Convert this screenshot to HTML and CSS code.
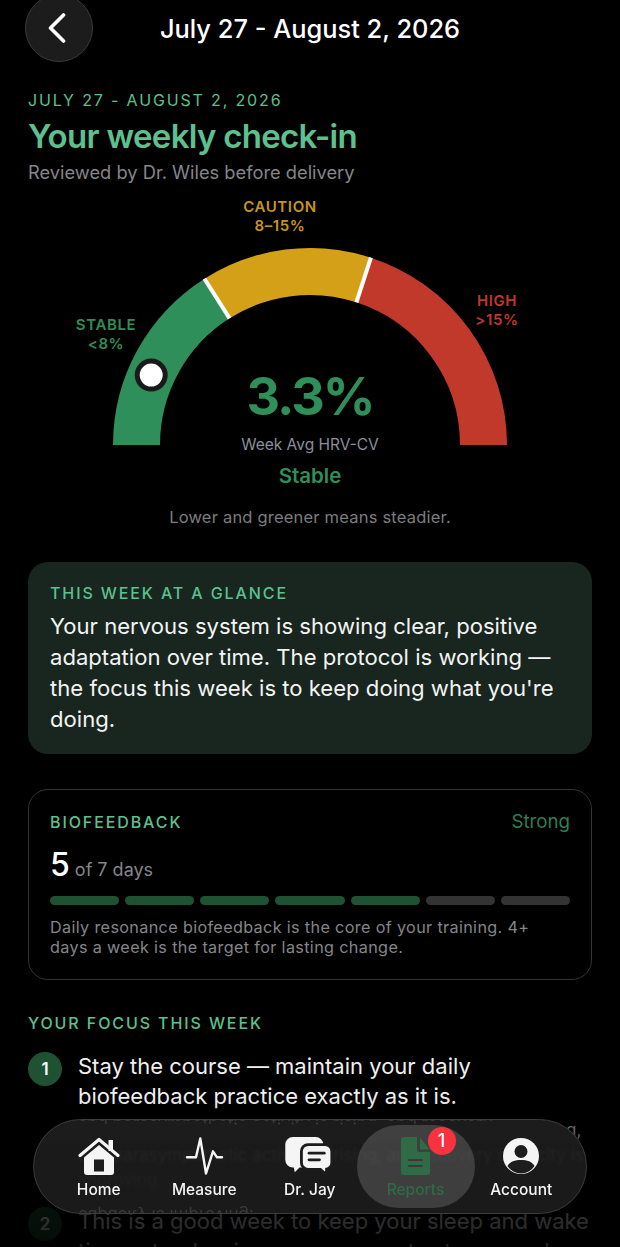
FILE: index.html
```html
<!DOCTYPE html>
<html lang="en">
<head>
    <meta charset="UTF-8">
    <meta name="viewport" content="width=device-width, initial-scale=1.0">
    <title>Weekly check-in</title>
    <link rel="stylesheet" href="styles.css">
</head>
<body>
    <div class="screen">
        <div class="topbar">
            <button class="back" aria-label="Back">
                <svg width="18" height="30" viewBox="0 0 18 30"><polyline points="15.5,2 2.5,15 15.5,28" fill="none" stroke="#fff" stroke-width="3.6" stroke-linecap="round" stroke-linejoin="round"/></svg>
            </button>
            <h1 class="topbar-title">July 27 - August 2, 2026</h1>
        </div>

        <div class="intro">
            <div class="eyebrow">JULY 27 - AUGUST 2, 2026</div>
            <h2 class="headline">Your weekly check-in</h2>
            <div class="reviewed">Reviewed by Dr. Wiles before delivery</div>
        </div>

        <div class="gauge">
            <svg class="gauge-arc" width="400" height="197" viewBox="0 0 400 197">
                <path d="M26.5 197 A173.5 173.5 0 0 1 107.04 50.51" fill="none" stroke="#2e8f5a" stroke-width="47"/>
                <path d="M107.04 50.51 A173.5 173.5 0 0 1 253.61 32" fill="none" stroke="#d4a017" stroke-width="47"/>
                <path d="M253.61 32 A173.5 173.5 0 0 1 373.5 197" fill="none" stroke="#c0392b" stroke-width="47"/>
                <line x1="119.6" y1="70.4" x2="94.4" y2="30.7" stroke="#fff" stroke-width="4"/>
                <line x1="246.4" y1="54.3" x2="260.9" y2="9.6" stroke="#fff" stroke-width="4"/>
                <circle cx="41.2" cy="127.1" r="14" fill="#fff" stroke="#1a1a1a" stroke-width="5"/>
            </svg>
            <div class="zone zone-caution">CAUTION<span>8–15%</span></div>
            <div class="zone zone-stable">STABLE<span>&lt;8%</span></div>
            <div class="zone zone-high">HIGH<span>&gt;15%</span></div>
            <div class="reading">
                <div class="reading-value">3.3%</div>
                <div class="reading-label">Week Avg HRV-CV</div>
                <div class="reading-state">Stable</div>
            </div>
        </div>
        <p class="gauge-note">Lower and greener means steadier.</p>

        <section class="glance">
            <div class="card-label">THIS WEEK AT A GLANCE</div>
            <p class="glance-text">Your nervous system is showing clear, positive adaptation over time. The protocol is working — the focus this week is to keep doing what you're doing.</p>
        </section>

        <section class="metric">
            <div class="metric-head">
                <div class="card-label">BIOFEEDBACK</div>
                <div class="metric-rating">Strong</div>
            </div>
            <div class="metric-count"><b>5</b> of 7 days</div>
            <div class="segments">
                <i class="seg on"></i><i class="seg on"></i><i class="seg on"></i><i class="seg on"></i><i class="seg on"></i><i class="seg"></i><i class="seg"></i>
            </div>
            <p class="metric-note">Daily resonance biofeedback is the core of your training. 4+ days a week is the target for lasting change.</p>
        </section>

        <section class="focus">
            <div class="card-label">YOUR FOCUS THIS WEEK</div>
            <div class="step">
                <div class="step-num">1</div>
                <div class="step-body">
                    <div class="step-text">Stay the course — maintain your daily biofeedback practice exactly as it is.</div>
                    <div class="step-why">Resting heart rate is trending downward, variability is climbing, and parasympathetic activity is rising, and recovery capacity is improving.</div>
                </div>
            </div>
            <div class="step step-two">
                <div class="step-num">2</div>
                <div class="step-body">
                    <div class="step-text">This is a good week to keep your sleep and wake times steady, since recovery gets stronger when your routine holds.</div>
                </div>
            </div>
        </section>

        <div class="fade"></div>

        <nav class="tabbar">
            <div class="mirror mirror-top">and parasympathetic activity is rising, and recovery</div>
            <div class="mirror mirror-bottom">capacity is improving.</div>
            <a class="tab">
                <svg width="42" height="38" viewBox="0 0 42 38">
                    <rect x="30.5" y="3" width="4.5" height="11" fill="#f5f5f5"/>
                    <polyline points="2,18.5 21,2.5 40,18.5" fill="none" stroke="#f5f5f5" stroke-width="3.2" stroke-linecap="round" stroke-linejoin="round"/>
                    <path d="M6 20.5 L21 8 L36 20.5 V35 a3 3 0 0 1 -3 3 H9 a3 3 0 0 1 -3 -3 Z" fill="#f5f5f5"/>
                    <rect x="16" y="22.5" width="10" height="12" fill="#1d1d1d"/>
                </svg>
                <span>Home</span>
            </a>
            <a class="tab">
                <svg width="37" height="38" viewBox="0 0 37 38">
                    <polyline points="1,20.3 10,20.3 14.3,1.5 20,36.5 27,14.3 31,20.3 36,20.3" fill="none" stroke="#f5f5f5" stroke-width="2.4" stroke-linecap="round" stroke-linejoin="round"/>
                </svg>
                <span>Measure</span>
            </a>
            <a class="tab">
                <svg width="51" height="38" viewBox="0 0 51 40">
                    <path d="M8 0 H32 a8 8 0 0 1 8 8 V24 a8 8 0 0 1 -8 8 H15 L10 37 L9 32 H8 a8 8 0 0 1 -8 -8 V8 a8 8 0 0 1 8 -8 Z" fill="#f5f5f5"/>
                    <path d="M24 8 H42 a7 7 0 0 1 7 7 V27 a7 7 0 0 1 -7 7 H44 L42.5 39 L37 34 H24 a7 7 0 0 1 -7 -7 V15 a7 7 0 0 1 7 -7 Z" fill="#f5f5f5" stroke="#1d1d1d" stroke-width="3"/>
                    <line x1="25" y1="17" x2="41" y2="17" stroke="#1d1d1d" stroke-width="3" stroke-linecap="round"/>
                    <line x1="25" y1="24" x2="36" y2="24" stroke="#1d1d1d" stroke-width="3" stroke-linecap="round"/>
                </svg>
                <span>Dr. Jay</span>
            </a>
            <a class="tab tab-active">
                <svg width="29" height="38" viewBox="0 0 29 38">
                    <path d="M3 0 H16 V12 a3 3 0 0 0 3 3 H29 V35 a3 3 0 0 1 -3 3 H3 a3 3 0 0 1 -3 -3 V3 a3 3 0 0 1 3 -3 Z" fill="#2f6b47"/>
                    <path d="M19 1 L29 12.5 H19 Z" fill="#2f6b47"/>
                    <line x1="8" y1="23" x2="21" y2="23" stroke="#3a3a3a" stroke-width="2" stroke-linecap="round"/>
                    <line x1="8" y1="29" x2="21" y2="29" stroke="#3a3a3a" stroke-width="2" stroke-linecap="round"/>
                </svg>
                <span>Reports</span>
                <b class="badge">1</b>
            </a>
            <a class="tab">
                <svg width="36" height="38" viewBox="0 0 36 38">
                    <circle cx="18" cy="19" r="18" fill="#f5f5f5"/>
                    <circle cx="18" cy="14.5" r="6.5" fill="#1d1d1d"/>
                    <path d="M4.5 29 C7 24.5 12 23 18 23 C24 23 29 24.5 31.5 29 A16 16 0 0 1 4.5 29 Z" fill="#1d1d1d"/>
                </svg>
                <span>Account</span>
            </a>
        </nav>
    </div>
</body>
</html>
```

FILE: styles.css
```css
* {
    box-sizing: border-box;
}

body {
    margin: 0;
    background: #000;
    color: #fff;
    font-family: Inter, "Noto Sans", sans-serif;
}

.screen {
    position: relative;
    width: 620px;
    height: 1247px;
    overflow: hidden;
    background: #000;
}

.topbar {
    position: relative;
    height: 58px;
    display: flex;
    align-items: center;
    justify-content: center;
}

.back {
    position: absolute;
    left: 25px;
    top: -6px;
    width: 68px;
    height: 68px;
    padding: 0 4px 0 0;
    display: flex;
    align-items: center;
    justify-content: center;
    background: #1c1c1c;
    border: 1px solid #3a3a3a;
    border-radius: 50%;
}

.topbar-title {
    margin: 0;
    font-size: 25.4px;
    font-weight: 500;
    line-height: 58px;
}

.intro {
    padding: 32px 28px 0;
}

.eyebrow {
    font-size: 16px;
    line-height: 20px;
    letter-spacing: 1.85px;
    color: #5cc08f;
}

.headline {
    margin: 6px 0 0;
    font-size: 33px;
    line-height: 40px;
    font-weight: 600;
    letter-spacing: -.7px;
    color: #5cc08f;
}

.reviewed {
    margin-top: 3px;
    font-size: 18.3px;
    line-height: 26px;
    color: #85858a;
}

.gauge {
    position: relative;
    height: 273px;
    padding-top: 63px;
}

.gauge-arc {
    display: block;
    margin: 0 auto;
    overflow: visible;
}

.zone {
    position: absolute;
    width: 120px;
    font-size: 15px;
    line-height: 19px;
    font-weight: 600;
    letter-spacing: .6px;
    text-align: center;
}

.zone span {
    display: block;
}

.zone-caution {
    left: 220px;
    top: 12px;
    color: #c8961a;
}

.zone-stable {
    left: 46px;
    top: 130px;
    color: #2e8f5a;
}

.zone-high {
    left: 437px;
    top: 106px;
    color: #c0392b;
}

.reading {
    position: absolute;
    left: 0;
    right: 0;
    top: 180px;
    text-align: center;
}

.reading-value {
    font-size: 52px;
    line-height: 64px;
    font-weight: 700;
    letter-spacing: -2px;
    color: #2e8f5a;
}

.reading-label {
    margin-top: 6px;
    font-size: 15.5px;
    line-height: 20px;
    color: #8a8f9c;
}

.reading-state {
    margin-top: 8px;
    font-size: 20.5px;
    line-height: 26px;
    font-weight: 600;
    color: #2e8f5a;
}

.gauge-note {
    margin: 48px 0 0;
    font-size: 16.5px;
    line-height: 22px;
    letter-spacing: .2px;
    text-align: center;
    color: #7c7c80;
}

.glance {
    margin: 34px 28px 0;
    height: 192px;
    padding: 21px 22px;
    background: #18261f;
    border-radius: 20px;
}

.card-label {
    font-size: 16px;
    line-height: 20px;
    font-weight: 500;
    letter-spacing: 1.9px;
    color: #5cc08f;
}

.glance-text {
    margin: 8px 0 0;
    font-size: 22.1px;
    line-height: 31px;
    color: #f4f4f4;
}

.metric {
    margin: 35px 28px 0;
    height: 191px;
    padding: 22px 21px;
    border: 1.5px solid #333;
    border-radius: 20px;
}

.metric-head {
    display: flex;
    justify-content: space-between;
    align-items: center;
}

.metric-rating {
    font-size: 18.7px;
    line-height: 20px;
    color: #2e7d55;
}

.metric-count {
    margin-top: 13px;
    font-size: 18px;
    line-height: 40px;
    color: #85858a;
}

.metric-count b {
    font-size: 32px;
    font-weight: 500;
    color: #fff;
}

.segments {
    display: flex;
    gap: 6px;
    margin-top: 6px;
}

.seg {
    flex: 1;
    height: 9px;
    border-radius: 5px;
    background: #333;
}

.seg.on {
    background: #1e5232;
}

.metric-note {
    margin: 12px 0 0;
    font-size: 16.2px;
    line-height: 20px;
    letter-spacing: .35px;
    color: #85858a;
}

.focus {
    padding: 33px 28px 0;
}

.step {
    display: flex;
    gap: 16px;
    margin-top: 18px;
}

.step-two {
    margin-top: 13px;
}

.step-num {
    flex: none;
    width: 34px;
    height: 34px;
    margin-top: 1px;
    border-radius: 50%;
    background: #1e5232;
    font-size: 17px;
    font-weight: 600;
    line-height: 34px;
    text-align: center;
}

.step-text {
    font-size: 22px;
    line-height: 30px;
    color: #f0f0f0;
}

.step-why {
    margin-top: 7px;
    font-size: 17px;
    line-height: 25px;
    color: #85858a;
}

.fade {
    position: absolute;
    left: 0;
    right: 0;
    bottom: 0;
    height: 150px;
    background: linear-gradient(to bottom, rgba(0, 0, 0, 0), rgba(0, 0, 0, .78) 100px, rgba(0, 0, 0, .85));
}

.tabbar {
    position: absolute;
    left: 33px;
    top: 1119px;
    width: 554px;
    height: 95px;
    padding: 0 12px;
    display: flex;
    overflow: hidden;
    background: linear-gradient(to bottom, #1c1c1c 20px, rgba(30, 30, 30, .87) 24px);
    border: 1px solid #3c3c3c;
    border-radius: 48px;
    backdrop-filter: blur(1px);
}

.mirror {
    position: absolute;
    left: 44px;
    white-space: nowrap;
    font-size: 17px;
    line-height: 20px;
    color: #3a3a3a;
    transform: scaleY(-1);
    filter: blur(.5px);
}

.mirror-top {
    top: -13px;
}

.mirror-bottom {
    bottom: -13px;
}

.tab {
    position: relative;
    flex: 1;
    height: 83px;
    margin-top: 5px;
    display: flex;
    flex-direction: column;
    align-items: center;
    padding-top: 12px;
    font-size: 15.5px;
    font-weight: 500;
    line-height: 20px;
    color: #f5f5f5;
}

.tab svg {
    display: block;
    height: 38px;
    margin-bottom: 5px;
    overflow: visible;
}

.tab-active {
    flex: none;
    width: 118px;
    margin: 5px -6px 0;
    background: rgba(255, 255, 255, .16);
    border-radius: 42px;
    color: #2f6b47;
}

.badge {
    position: absolute;
    left: 71px;
    top: 2px;
    width: 28px;
    height: 28px;
    border-radius: 50%;
    background: #f8333f;
    color: #fff;
    font-size: 18px;
    font-weight: 500;
    line-height: 28px;
    text-align: center;
}
```
